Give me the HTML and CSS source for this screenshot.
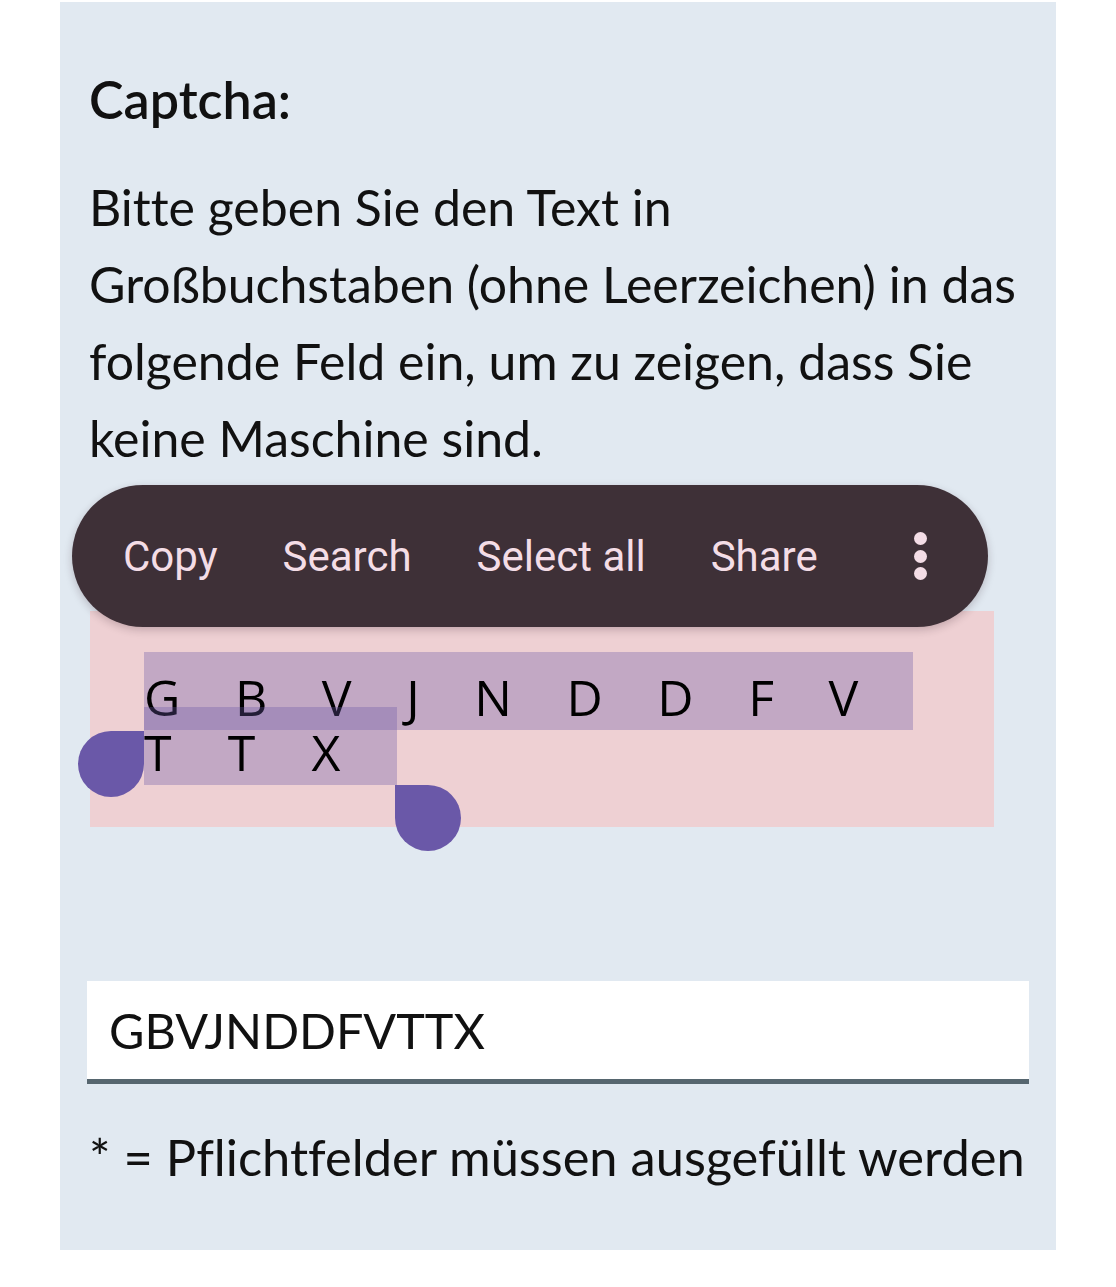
FILE: index.html
```html
<!DOCTYPE html>
<html lang="de">
<head>
<meta charset="utf-8">
<title>Captcha</title>
<link rel="stylesheet" href="styles.css">
</head>
<body>
<div class="panel">
  <h2 class="heading">Captcha:</h2>
  <p class="intro">Bitte geben Sie den Text in Großbuchstaben (ohne Leerzeichen) in das folgende Feld ein, um zu zeigen, dass Sie keine Maschine sind.</p>

  <div class="captcha">
    <div class="toolbar">
      <span class="tb-item">Copy</span>
      <span class="tb-item">Search</span>
      <span class="tb-item">Select all</span>
      <span class="tb-item">Share</span>
      <span class="tb-more"><i class="dot"></i><i class="dot"></i><i class="dot"></i></span>
    </div>
    <div class="captcha-text">
      <div class="cline"><span class="sel">G B V J N D D F V </span></div>
      <div class="cline cline-2"><span class="sel">T T X </span></div>
    </div>
    <span class="handle handle-start"></span>
    <span class="handle handle-end"></span>
  </div>

  <input class="field" type="text" value="GBVJNDDFVTTX">

  <p class="note">* = Pflichtfelder müssen ausgefüllt werden</p>
</div>
</body>
</html>
```

FILE: styles.css
```css
html, body {
  margin: 0;
  padding: 0;
  background: #ffffff;
}

.panel {
  box-sizing: border-box;
  width: 996px;
  margin: 2px 0 0 60px;
  padding: 59px 8px 55px 29px;
  background: #e1e9f1;
  font-family: "Lato", "Liberation Sans", sans-serif;
  font-variant-ligatures: none;
  color: #111111;
}

.heading {
  margin: 0;
  font-size: 52px;
  line-height: 77px;
  font-weight: 600;
}

.intro {
  margin: 31px 0 0 0;
  max-width: 950px;
  font-size: 50px;
  line-height: 77px;
  font-weight: 400;
}

.captcha {
  position: relative;
  box-sizing: border-box;
  width: 904px;
  height: 216px;
  margin: 134px 0 0 1px;
  padding: 58px 0 0 54px;
  background: #eed0d3;
}

.captcha-text {
  font-family: "Open Sans", "Noto Sans", sans-serif;
  font-size: 50px;
  line-height: 55px;
  letter-spacing: 20.8px;
  color: #000000;
}

.cline {
  height: 55px;
}

.cline-2 {
  letter-spacing: 21.6px;
}

.sel {
  white-space: pre;
  padding-top: 10.5px;
  background: rgba(107, 89, 168, 0.33);
}

.handle {
  position: absolute;
  width: 66px;
  height: 66px;
  background: #6a58a8;
  border-radius: 50%;
}

.handle-start {
  left: -12px;
  top: 120px;
  border-top-right-radius: 0;
}

.handle-end {
  left: 305px;
  top: 174px;
  border-top-left-radius: 0;
}

.toolbar {
  position: absolute;
  left: -18px;
  top: -126px;
  z-index: 2;
  box-sizing: border-box;
  width: 916px;
  height: 142px;
  padding-left: 18px;
  display: flex;
  align-items: center;
  background: #3e3037;
  border-radius: 71px;
  box-shadow: 0 3px 8px rgba(40, 20, 30, 0.22);
  font-family: "Roboto", "Liberation Sans", sans-serif;
  font-size: 42px;
  color: #f4dde6;
}

.tb-item {
  padding: 0 33px;
  white-space: nowrap;
}

.tb-item + .tb-item {
  margin-left: -1px;
}

.tb-more {
  margin-left: auto;
  margin-right: 34px;
  width: 68px;
  display: flex;
  flex-direction: column;
  align-items: center;
  gap: 4.5px;
}

.dot {
  display: block;
  width: 13px;
  height: 13px;
  border-radius: 50%;
  background: #f4dde6;
}

.field {
  display: block;
  box-sizing: border-box;
  width: 942px;
  height: 103px;
  margin: 154px 0 0 -2px;
  padding: 0 22px;
  border: 0;
  border-bottom: 5px solid #56666f;
  border-radius: 0;
  background: #ffffff;
  font-family: "Lato", "Liberation Sans", sans-serif;
  font-size: 48.5px;
  color: #111111;
  outline: none;
}

.note {
  margin: 34px 0 0 0;
  font-size: 50.6px;
  line-height: 77px;
  white-space: nowrap;
}
```
